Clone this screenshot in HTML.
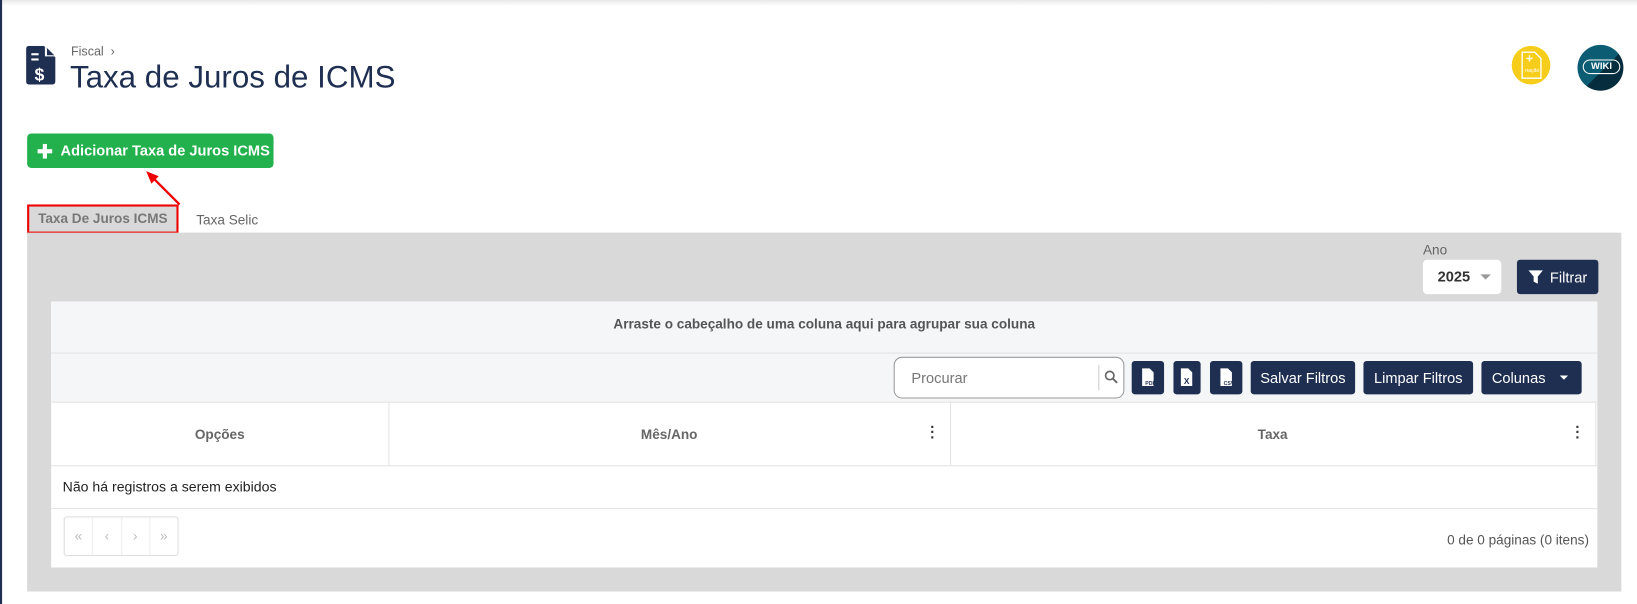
<!DOCTYPE html>
<html><head><meta charset="utf-8"><style>
*{box-sizing:border-box;margin:0;padding:0}
body{width:1637px;height:604px;background:#fff;font-family:"Liberation Sans",Arial,sans-serif;position:relative;overflow:hidden;color:#333}
#w{position:absolute;left:0;top:0;width:1568px;height:579px;transform:scale(1.044,1.0432);transform-origin:0 0}
.a{position:absolute}
.btn{position:absolute;background:#1f2f52;color:#fff;border-radius:3px;font-size:14px;display:flex;align-items:center;justify-content:center}
</style></head><body>
<div class="a" style="left:0;top:0;width:1637px;height:6px;background:linear-gradient(#e8e8e8,#fff)"></div>
<div id="w">
<div class="a" style="left:0;top:0;width:2px;height:579px;background:#1f2f52"></div>
<svg class="a" style="left:25px;top:44px" width="30" height="38" viewBox="0 0 30 38"><path d="M3 0H17L28 11V34Q28 37 25 37H3Q0 37 0 34V3Q0 0 3 0Z" fill="#1f2f52"/><path d="M18 1V10H27Z" fill="#fff"/><path d="M20 2L27 9H20Z" fill="#1f2f52"/><rect x="5" y="7" width="7" height="2" fill="#fff"/><rect x="5" y="12" width="7" height="2" fill="#fff"/><text x="8" y="33" fill="#fff" font-size="17" font-weight="bold" font-family="Liberation Sans">$</text></svg>
<div class="a" style="left:68px;top:42px;font-size:12px;color:#666">Fiscal&nbsp; ›</div>
<div class="a" style="left:67px;top:58px;font-size:30px;color:#1f2f52">Taxa de Juros de ICMS</div>
<div class="a" style="left:1448px;top:44px;width:37px;height:37px;border-radius:50%;background:#f7cd1c"></div>
<svg class="a" style="left:1456px;top:49px" width="22" height="27" viewBox="0 0 22 27"><path d="M2 1H14L20 7V26H2Z" fill="none" stroke="#fff" stroke-width="1.3"/><path d="M6 7H12M9 4V10" stroke="#fff" stroke-width="1.3"/><text x="5" y="20" fill="#fff" font-size="5">nação</text></svg>
<div class="a" style="left:1511px;top:43px;width:44px;height:44px;border-radius:50%;background:linear-gradient(135deg,#0c5c73 55%,#062d3d 55%)"></div>
<div class="a" style="left:1516px;top:57px;width:36px;height:14px;border:1.5px solid #fff;border-radius:8px;color:#fff;font-size:9px;font-weight:bold;text-align:center;line-height:11px">WIKI</div>
<div class="a" style="left:26px;top:128px;width:236px;height:33px;background:#22b14c;border-radius:4px;color:#fff;font-size:14px;font-weight:bold;line-height:33px;padding-left:32px">Adicionar Taxa de Juros ICMS</div>
<div class="a" style="left:36px;top:143px;width:14px;height:4px;background:#fff"></div>
<div class="a" style="left:41px;top:138px;width:4px;height:14px;background:#fff"></div>
<svg class="a" style="left:135px;top:160px" width="45" height="40"><path d="M37 36L11 10" stroke="#e00" stroke-width="2.2"/><path d="M5 4L17 9L10 16Z" fill="#e00"/></svg>
<div class="a" style="left:26px;top:196px;width:145px;height:28px;background:#d9d9d9;border:2.5px solid #e00;color:#777;font-size:13px;font-weight:bold;text-align:center;line-height:23px">Taxa De Juros ICMS</div>
<div class="a" style="left:188px;top:203px;font-size:13px;color:#666">Taxa Selic</div>
<div class="a" style="left:26px;top:223px;width:1527px;height:344px;background:#d9d9d9"></div>
<div class="a" style="left:1363px;top:232px;font-size:13px;color:#666">Ano</div>
<div class="a" style="left:1363px;top:249px;width:75px;height:33px;background:#fff;border-radius:4px;font-size:14px;font-weight:bold;line-height:33px;padding-left:14px;color:#333">2025</div>
<div class="a" style="left:1418px;top:263px;border:5px solid transparent;border-top:5px solid #999"></div>
<div class="btn" style="left:1453px;top:249px;width:78px;height:33px"><svg width="14" height="13" style="margin-right:7px"><path d="M0 0H14L9 6V13L5 11V6Z" fill="#fff"/></svg>Filtrar</div>
<div class="a" style="left:49px;top:289px;width:1481px;height:255px;background:#fff"></div>
<div class="a" style="left:49px;top:289px;width:1481px;height:97px;background:#f5f6f8;border-bottom:1px solid #e3e3e3"></div>
<div class="a" style="left:49px;top:338px;width:1481px;height:1px;background:#e3e3e3"></div>
<div class="a" style="left:49px;top:303px;width:1481px;text-align:center;font-size:13px;color:#555;font-weight:bold">Arraste o cabeçalho de uma coluna aqui para agrupar sua coluna</div>
<div class="a" style="left:856px;top:342px;width:221px;height:40px;background:#fff;border:1px solid #999;border-radius:8px;font-size:14px;color:#777;line-height:38px;padding-left:16px">Procurar</div>
<div class="a" style="left:1052px;top:350px;width:1px;height:24px;background:#ccc"></div>
<svg class="a" style="left:1058px;top:355px" width="13" height="13"><circle cx="5" cy="5" r="4" fill="none" stroke="#666" stroke-width="1.6"/><path d="M8 8L12 12" stroke="#666" stroke-width="1.8"/></svg>
<div class="btn" style="left:1084px;top:346px;width:31px;height:32px"><svg width="14" height="18"><path d="M1 0H8L12 4V17H1Z" fill="#fff"/><text x="4" y="16" font-size="5" fill="#1f2f52" font-weight="bold">PDF</text></svg></div>
<div class="btn" style="left:1124px;top:346px;width:26px;height:32px"><svg width="12" height="18"><path d="M0 0H7L11 4V17H0Z" fill="#fff"/><text x="3" y="15" font-size="8" fill="#1f2f52" font-weight="bold">X</text></svg></div>
<div class="btn" style="left:1159px;top:346px;width:31px;height:32px"><svg width="14" height="18"><path d="M1 0H8L12 4V17H1Z" fill="#fff"/><text x="4" y="16" font-size="5" fill="#1f2f52" font-weight="bold">CSV</text></svg></div>
<div class="btn" style="left:1198px;top:346px;width:100px;height:32px">Salvar Filtros</div>
<div class="btn" style="left:1306px;top:346px;width:105px;height:32px">Limpar Filtros</div>
<div class="btn" style="left:1419px;top:346px;width:96px;height:32px;justify-content:flex-start;padding-left:10px">Colunas<span style="position:absolute;right:13px;top:14px;border:4px solid transparent;border-top:4px solid #fff"></span></div>
<div class="a" style="left:49px;top:446px;width:1481px;height:1px;background:#e3e3e3"></div>
<div class="a" style="left:372px;top:386px;width:1px;height:60px;background:#e3e3e3"></div>
<div class="a" style="left:910px;top:386px;width:1px;height:60px;background:#e3e3e3"></div>
<div class="a" style="left:1528px;top:386px;width:1px;height:60px;background:#e3e3e3"></div>
<div class="a" style="left:49px;top:409px;width:323px;text-align:center;font-size:13px;color:#666;font-weight:bold">Opções</div>
<div class="a" style="left:372px;top:409px;width:538px;text-align:center;font-size:13px;color:#666;font-weight:bold">Mês/Ano</div>
<div class="a" style="left:910px;top:409px;width:618px;text-align:center;font-size:13px;color:#666;font-weight:bold">Taxa</div>
<div class="a" style="left:891px;top:407px;font-size:14px;font-weight:bold;color:#333;line-height:5px">·<br>·<br>·</div>
<div class="a" style="left:1509px;top:407px;font-size:14px;font-weight:bold;color:#333;line-height:5px">·<br>·<br>·</div>
<div class="a" style="left:60px;top:459px;font-size:13.5px;color:#222">Não há registros a serem exibidos</div>
<div class="a" style="left:49px;top:487px;width:1481px;height:1px;background:#e3e3e3"></div>
<div class="a" style="left:61px;top:495px;width:110px;height:38px;border:1px solid #ddd;border-radius:3px;display:flex;color:#bbb;font-size:13px">
<div style="flex:1;text-align:center;line-height:36px;border-right:1px solid #eee">«</div><div style="flex:1;text-align:center;line-height:36px;border-right:1px solid #eee">‹</div><div style="flex:1;text-align:center;line-height:36px;border-right:1px solid #eee">›</div><div style="flex:1;text-align:center;line-height:36px">»</div></div>
<div class="a" style="left:1300px;top:510px;width:222px;text-align:right;font-size:13px;color:#555">0 de 0 páginas (0 itens)</div>
</div>
</body></html>
